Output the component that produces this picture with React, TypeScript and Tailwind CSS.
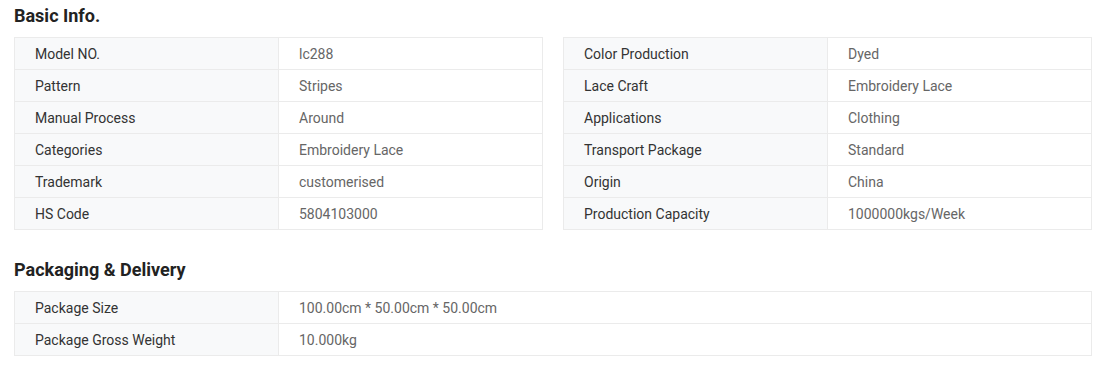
import React from 'react';

type Row = [string, string];

const leftRows: Row[] = [
  ['Model NO.', 'lc288'],
  ['Pattern', 'Stripes'],
  ['Manual Process', 'Around'],
  ['Categories', 'Embroidery Lace'],
  ['Trademark', 'customerised'],
  ['HS Code', '5804103000'],
];

const rightRows: Row[] = [
  ['Color Production', 'Dyed'],
  ['Lace Craft', 'Embroidery Lace'],
  ['Applications', 'Clothing'],
  ['Transport Package', 'Standard'],
  ['Origin', 'China'],
  ['Production Capacity', '1000000kgs/Week'],
];

const packRows: Row[] = [
  ['Package Size', '100.00cm * 50.00cm * 50.00cm'],
  ['Package Gross Weight', '10.000kg'],
];

const InfoTable: React.FC<{ rows: Row[]; className?: string }> = ({ rows, className = '' }) => (
  <div className={`border border-[#ebebeb] border-b-0 ${className}`}>
    {rows.map(([label, value]) => (
      <div key={label} className="flex h-[32px] border-b border-[#ebebeb] text-[14px] leading-[30px]">
        <div className="w-[264px] shrink-0 bg-[#f8f9fa] border-r border-[#ebebeb] pl-[20px] pt-[1px] text-[#333]">
          {label}
        </div>
        <div className="flex-1 pl-[20px] pt-[1px] text-[#666]">{value}</div>
      </div>
    ))}
  </div>
);

const App: React.FC = () => {
  return (
    <div className="bg-white min-h-[367px] pl-[14px] pt-[4px] font-['Roboto','Liberation_Sans',sans-serif]">
      <div className="w-[1078px]">
        <h2 className="h-[24px] leading-[24px] text-[18px] font-bold text-[#222] mb-[9px]">Basic Info.</h2>
        <div className="flex gap-[20px]">
          <InfoTable rows={leftRows} className="w-[529px]" />
          <InfoTable rows={rightRows} className="w-[529px]" />
        </div>

        <h2 className="h-[24px] leading-[24px] text-[18px] font-bold text-[#222] mt-[28px] mb-[9px]">
          Packaging &amp; Delivery
        </h2>
        <InfoTable rows={packRows} />
      </div>
    </div>
  );
};

export default App;
